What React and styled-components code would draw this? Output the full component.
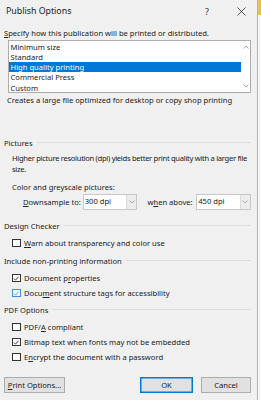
import React from 'react';
import styled, { createGlobalStyle } from 'styled-components';

const GlobalStyle = createGlobalStyle`
  html, body {
    margin: 0;
    padding: 0;
    background: #f6f6f6;
  }
  body {
    font-family: 'Noto Sans', 'Open Sans', sans-serif;
    font-size: 7.6px;
    color: #222;
  }
`;

const Screen = styled.div`
  display: flex;
  width: 261px;
  height: 400px;
  overflow: hidden;
`;

const Dialog = styled.div`
  width: 258px;
  height: 400px;
  background: #f0f0f0;
  border-right: 1px solid #b4b4b4;
  box-sizing: border-box;
`;

const Desktop = styled.div`
  flex: 1;
  display: flex;
  flex-direction: column;
`;

const DesktopTop = styled.div`
  height: 15px;
  background: #e7bf5d;
`;

const TitleBar = styled.div`
  height: 22px;
  display: flex;
  align-items: center;
  padding: 0 6px;
  font-size: 8.8px;
`;

const Title = styled.div`
  flex: 1;
`;

const TitleButton = styled.div`
  width: 20px;
  display: flex;
  justify-content: center;
  font-size: 9px;
  color: #333;
  margin-left: ${({ gap }) => gap || 0}px;
`;

const Body = styled.div`
  padding: 0 6px 0 4px;
`;

const Label = styled.div`
  line-height: 11px;
  margin-top: ${({ top }) => top || 0}px;
  margin-left: ${({ indent }) => indent || 0}px;
  letter-spacing: ${({ tight }) => (tight ? '-0.3px' : 'normal')};
  white-space: nowrap;
`;

const Key = styled.span`
  text-decoration: underline;
  text-underline-offset: 1px;
`;

const ListBox = styled.div`
  margin: 1.5px 0 0 3.5px;
  height: 53px;
  border: 1px solid #adadad;
  background: #fff;
  display: flex;
  box-sizing: border-box;
`;

const ListItems = styled.div`
  flex: 1;
  padding-top: 0.5px;
`;

const ListItem = styled.div`
  height: 10.3px;
  line-height: 10.3px;
  padding-left: 2px;
  background: ${({ selected }) => (selected ? '#0078d7' : 'transparent')};
  color: ${({ selected }) => (selected ? '#fff' : '#222')};
`;

const ScrollBar = styled.div`
  width: 9px;
  background: #fff;
  display: flex;
  flex-direction: column;
  justify-content: space-between;
  align-items: center;
  padding: 4px 0;
`;

const Group = styled.div`
  display: flex;
  align-items: center;
  line-height: 11px;
  margin-top: ${({ top }) => top || 0}px;
  &::after {
    content: '';
    flex: 1;
    height: 1px;
    background: #dcdcdc;
    margin-left: 4px;
    margin-top: -2px;
  }
`;

const ComboRow = styled.div`
  display: flex;
  align-items: center;
  height: 16px;
  margin-top: 1px;
  padding-left: 19px;
`;

const ComboLabel = styled.div`
  width: ${({ w }) => w}px;
  padding-left: ${({ pad }) => pad || 0}px;
  box-sizing: border-box;
  white-space: nowrap;
`;

const Combo = styled.div`
  width: 55px;
  height: 16px;
  box-sizing: border-box;
  border: 1px solid #c8c8c8;
  background: #fff;
  display: flex;
`;

const ComboText = styled.div`
  flex: 1;
  line-height: 13px;
  padding-left: 1px;
`;

const ComboButton = styled.div`
  width: 9px;
  background: #ececec;
  border-left: 1px solid #dcdcdc;
  display: flex;
  align-items: center;
  justify-content: center;
`;

const CheckRow = styled.div`
  display: flex;
  align-items: center;
  height: 15px;
  padding-left: 8px;
  margin-top: ${({ top }) => top || 0}px;
`;

const Box = styled.div`
  width: 8.5px;
  height: 8.5px;
  box-sizing: border-box;
  border: 1px solid ${({ focus }) => (focus ? '#3b8ee0' : '#333')};
  background: #fff;
  margin-right: 3.5px;
  display: flex;
  align-items: center;
  justify-content: center;
`;

const Buttons = styled.div`
  display: flex;
  margin-top: 12.5px;
`;

const Button = styled.div`
  width: ${({ w }) => w}px;
  height: 16px;
  box-sizing: border-box;
  border: 1px solid ${({ primary }) => (primary ? '#0078d7' : '#adadad')};
  background: #e1e1e1;
  display: flex;
  align-items: center;
  justify-content: center;
  margin-left: ${({ gap }) => gap || 0}px;
  box-shadow: ${({ primary }) => (primary ? 'inset 0 0 0 0.5px #0078d7' : 'none')};
`;

const Chevron = ({ up }) => (
  <svg width="6" height="4" viewBox="0 0 6 4">
    <path d={up ? 'M0.5 3.5 L3 1 L5.5 3.5' : 'M0.5 0.5 L3 3 L5.5 0.5'} fill="none" stroke="#9a9a9a" strokeWidth="0.8" />
  </svg>
);

const Tick = ({ color }) => (
  <svg width="7" height="7" viewBox="0 0 7 7">
    <path d="M1 3.6 L2.7 5.3 L6 1.5" fill="none" stroke={color || '#222'} strokeWidth="0.9" />
  </svg>
);

const CloseIcon = () => (
  <svg width="9" height="9" viewBox="0 0 9 9">
    <path d="M0.5 0.5 L8.5 8.5 M8.5 0.5 L0.5 8.5" fill="none" stroke="#333" strokeWidth="0.8" />
  </svg>
);

const Check = ({ checked, focus, top, children }) => (
  <CheckRow top={top}>
    <Box focus={focus}>{checked ? <Tick color={focus ? '#2a7fd4' : '#222'} /> : null}</Box>
    <span>{children}</span>
  </CheckRow>
);

const App = () => {
  return (
    <Screen>
      <GlobalStyle />
      <Dialog>
        <TitleBar>
          <Title>Publish Options</Title>
          <TitleButton>?</TitleButton>
          <TitleButton gap={14}>
            <CloseIcon />
          </TitleButton>
        </TitleBar>
        <Body>
          <Label top={5.5}>
            <Key>S</Key>pecify how this publication will be printed or distributed.
          </Label>
          <ListBox>
            <ListItems>
              <ListItem>Minimum size</ListItem>
              <ListItem>Standard</ListItem>
              <ListItem selected>High quality printing</ListItem>
              <ListItem>Commercial Press</ListItem>
              <ListItem>Custom</ListItem>
            </ListItems>
            <ScrollBar>
              <Chevron up />
              <Chevron />
            </ScrollBar>
          </ListBox>
          <Label top={2.2} indent={3}>Creates a large file optimized for desktop or copy shop printing</Label>

          <Group top={32.3}>Pictures</Group>
          <Label top={3.3} indent={8} tight>
            Higher picture resolution (dpi) yields better print quality with a larger file
            <br />
            size.
          </Label>
          <Label top={7} indent={8}>Color and greyscale pictures:</Label>
          <ComboRow>
            <ComboLabel w={60}>
              <Key>D</Key>ownsample to:
            </ComboLabel>
            <Combo>
              <ComboText>300 dpi</ComboText>
              <ComboButton>
                <Chevron />
              </ComboButton>
            </Combo>
            <ComboLabel w={59} pad={10}>
              w<Key>h</Key>en above:
            </ComboLabel>
            <Combo>
              <ComboText>450 dpi</ComboText>
              <ComboButton>
                <Chevron />
              </ComboButton>
            </Combo>
          </ComboRow>

          <Group top={11.2}>Design Checker</Group>
          <Check top={3.6}>
            <Key>W</Key>arn about transparency and color use
          </Check>

          <Group top={5.4}>Include non-printing information</Group>
          <Check top={3.6} checked>
            Document p<Key>r</Key>operties
          </Check>
          <Check checked focus>
            Docu<Key>m</Key>ent structure tags for accessibility
          </Check>

          <Group top={4.4}>PDF Options</Group>
          <Check top={3.6}>
            PDF/<Key>A</Key> compliant
          </Check>
          <Check checked>Bitmap text when fonts may not be embedded</Check>
          <Check>
            E<Key>n</Key>crypt the document with a password
          </Check>

          <Buttons>
            <Button w={61}>
              <Key>P</Key>rint Options...
            </Button>
            <Button w={53} gap={75} primary>
              OK
            </Button>
            <Button w={50} gap={8}>
              Cancel
            </Button>
          </Buttons>
        </Body>
      </Dialog>
      <Desktop>
        <DesktopTop />
      </Desktop>
    </Screen>
  );
};

export default App;
